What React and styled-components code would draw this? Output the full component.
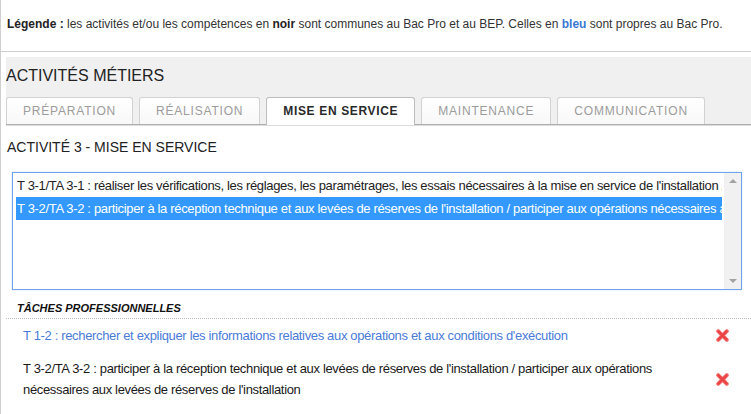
import React from "react";
import styled, { createGlobalStyle } from "styled-components";

const GlobalStyle = createGlobalStyle`
  html, body {
    margin: 0;
    padding: 0;
    background: #ffffff;
  }
  body {
    font-family: "Liberation Sans", Arial, sans-serif;
    color: #222;
  }
`;

const tabs = [
  { label: "Préparation" },
  { label: "Réalisation" },
  { label: "Mise en service", active: true },
  { label: "Maintenance" },
  { label: "Communication" },
];

const options = [
  {
    text: "T 3-1/TA 3-1 : réaliser les vérifications, les réglages, les paramétrages, les essais nécessaires à la mise en service de l'installation / participer aux essais",
  },
  {
    text: "T 3-2/TA 3-2 : participer à la réception technique et aux levées de réserves de l'installation / participer aux opérations nécessaires aux levées de réserves de l'installation",
    selected: true,
  },
];

const tasks = [
  {
    text: "T 1-2 : rechercher et expliquer les informations relatives aux opérations et aux conditions d'exécution",
    blue: true,
  },
  {
    text: "T 3-2/TA 3-2 : participer à la réception technique et aux levées de réserves de l'installation / participer aux opérations nécessaires aux levées de réserves de l'installation",
  },
];

const RemoveIcon = () => (
  <svg width="13" height="13" viewBox="0 0 13 13">
    <path
      d="M2.2 2.2 L10.8 10.8 M10.8 2.2 L2.2 10.8"
      stroke="#f57474"
      strokeWidth="4"
      strokeLinecap="round"
    />
    <path
      d="M2.4 2.4 L10.6 10.6 M10.6 2.4 L2.4 10.6"
      stroke="#ea4444"
      strokeWidth="2.4"
      strokeLinecap="round"
    />
  </svg>
);

const App = () => {
  return (
    <>
      <GlobalStyle />
      <Page>
        <Legend>
          <b>Légende :</b> les activités et/ou les compétences en <b>noir</b>{" "}
          sont communes au Bac Pro et au BEP. Celles en <Blue>bleu</Blue> sont
          propres au Bac Pro.
        </Legend>
        <Main>
          <Panel>
            <PanelTitle>ACTIVITÉS MÉTIERS</PanelTitle>
            <TabRow>
              {tabs.map((t) => (
                <Tab key={t.label} $active={t.active}>
                  {t.label}
                </Tab>
              ))}
            </TabRow>
          </Panel>
          <ActivityTitle>ACTIVITÉ 3 - MISE EN SERVICE</ActivityTitle>
          <ListBox>
            <OptionList>
              {options.map((o) => (
                <Option key={o.text} $selected={o.selected}>
                  {o.text}
                </Option>
              ))}
            </OptionList>
            <ScrollTrack>
              <Arrow $up />
              <Arrow />
            </ScrollTrack>
          </ListBox>
          <TasksHeader>TÂCHES PROFESSIONNELLES</TasksHeader>
          {tasks.map((t) => (
            <TaskRow key={t.text}>
              <TaskText $blue={t.blue}>{t.text}</TaskText>
              <IconCell>
                <RemoveIcon />
              </IconCell>
            </TaskRow>
          ))}
        </Main>
      </Page>
    </>
  );
};

export default App;

const Page = styled.div`
  min-height: 414px;
  border-left: 1px solid #cfcfcf;
  box-sizing: border-box;
`;

const Legend = styled.div`
  height: 52px;
  box-sizing: border-box;
  padding: 17px 6px 0;
  border-bottom: 1px solid #cfcfcf;
  font-size: 12px;
  line-height: 14px;
  color: #333;

  & b {
    color: #222;
  }
`;

const Blue = styled.b`
  && {
    color: #3a78d4;
  }
`;

const Main = styled.div`
  padding-left: 5px;
`;

const Panel = styled.div`
  margin-top: 5px;
  background: #f0f0f0;
  padding-top: 10px;
`;

const PanelTitle = styled.div`
  font-size: 16px;
  line-height: 18px;
  color: #222;
  margin-bottom: 12px;
`;

const TabRow = styled.div`
  display: flex;
  gap: 6px;
  height: 27px;
  border-bottom: 1px solid #b0b0b0;
  box-shadow: 0 1px 0 #dcdcdc;
`;

const Tab = styled.div`
  height: ${(p) => (p.$active ? "28px" : "27px")};
  box-sizing: border-box;
  padding: 0 16px;
  border: 1px solid ${(p) => (p.$active ? "#bdbdbd" : "#d2d2d2")};
  border-bottom: none;
  border-radius: 3px 3px 0 0;
  background: ${(p) =>
    p.$active ? "#ffffff" : "linear-gradient(#ffffff, #f8f8f8)"};
  color: ${(p) => (p.$active ? "#2a2a2a" : "#9c9c9c")};
  font-weight: ${(p) => (p.$active ? "bold" : "normal")};
  font-size: 12px;
  letter-spacing: ${(p) => (p.$active ? "0.65px" : "0.8px")};
  line-height: 26px;
  text-transform: uppercase;
  white-space: nowrap;
  position: relative;
  z-index: ${(p) => (p.$active ? 1 : 0)};
`;

const ActivityTitle = styled.div`
  margin-top: 14px;
  padding-left: 1px;
  font-size: 14px;
  line-height: 16px;
  color: #222;
`;

const ListBox = styled.div`
  display: flex;
  height: 118px;
  box-sizing: border-box;
  margin: 17px 9px 0 6px;
  border: 1px solid #6fa3ea;
  box-shadow: 0 0 1px #a9c9f2;
  background: #fff;
`;

const OptionList = styled.div`
  flex: 1;
  min-width: 0;
  padding: 1px 2px 0 3px;
  overflow: hidden;
`;

const Option = styled.div`
  height: 23px;
  line-height: 23px;
  padding-left: 1px;
  font-size: 13px;
  letter-spacing: -0.33px;
  white-space: nowrap;
  overflow: hidden;
  color: ${(p) => (p.$selected ? "#ffffff" : "#222")};
  background: ${(p) => (p.$selected ? "#3399ff" : "transparent")};
`;

const ScrollTrack = styled.div`
  width: 17px;
  background: #f1f1f1;
  display: flex;
  flex-direction: column;
  justify-content: space-between;
  align-items: center;
  padding: 6px 0;
  box-sizing: border-box;
`;

const Arrow = styled.div`
  width: 0;
  height: 0;
  border-left: 4px solid transparent;
  border-right: 4px solid transparent;
  ${(p) =>
    p.$up
      ? "border-bottom: 4px solid #a3a3a3;"
      : "border-top: 4px solid #a3a3a3;"}
`;

const TasksHeader = styled.div`
  margin-top: 12px;
  padding: 0 0 3px 11px;
  font-size: 11px;
  line-height: 13px;
  font-weight: bold;
  font-style: italic;
  color: #111;
  border-bottom: 1px dotted #b8b8b8;
`;

const TaskRow = styled.div`
  display: flex;
  align-items: center;
  padding: 6px 0 6px 17px;
`;

const TaskText = styled.div`
  flex: 1;
  font-size: 13px;
  letter-spacing: -0.34px;
  line-height: 21px;
  color: ${(p) => (p.$blue ? "#4a7bd8" : "#1a1a1a")};
`;

const IconCell = styled.div`
  width: 58px;
  display: flex;
  justify-content: center;
  align-items: center;
`;
